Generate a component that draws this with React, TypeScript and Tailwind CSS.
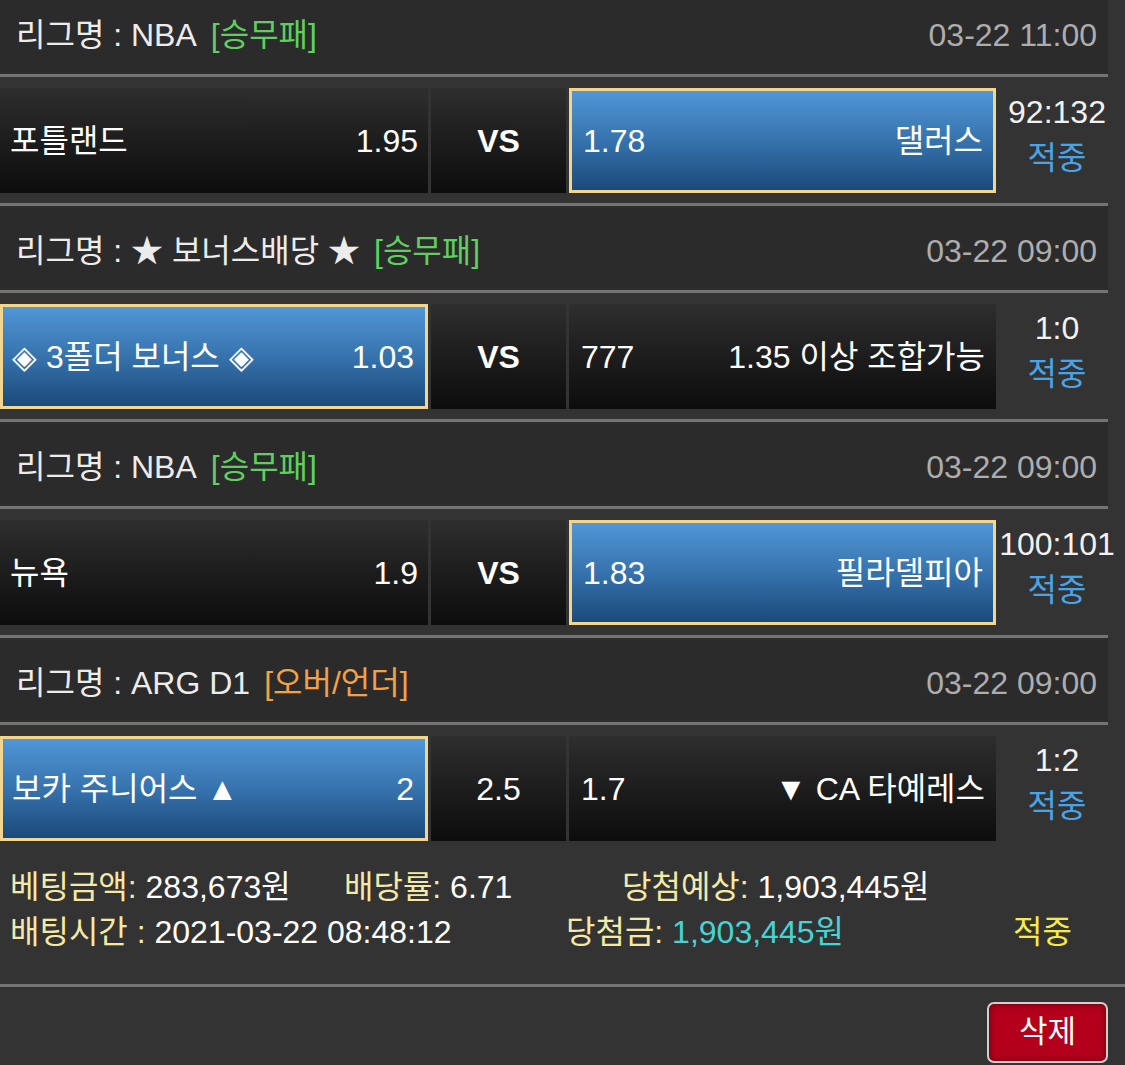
type Side = { name: string; odds: string; picked?: boolean };

type Match = {
  league: string;
  kind: string;
  kindColor: string;
  time: string;
  home: Side;
  mid: string;
  midBold?: boolean;
  away: Side;
  score: string;
};

const matches: Match[] = [
  {
    league: "리그명 : NBA",
    kind: "[승무패]",
    kindColor: "text-[#5fcf5f]",
    time: "03-22 11:00",
    home: { name: "포틀랜드", odds: "1.95" },
    mid: "VS",
    midBold: true,
    away: { name: "댈러스", odds: "1.78", picked: true },
    score: "92:132",
  },
  {
    league: "리그명 : ★ 보너스배당 ★",
    kind: "[승무패]",
    kindColor: "text-[#5fcf5f]",
    time: "03-22 09:00",
    home: { name: "◈ 3폴더 보너스 ◈", odds: "1.03", picked: true },
    mid: "VS",
    midBold: true,
    away: { name: "1.35 이상 조합가능", odds: "777" },
    score: "1:0",
  },
  {
    league: "리그명 : NBA",
    kind: "[승무패]",
    kindColor: "text-[#5fcf5f]",
    time: "03-22 09:00",
    home: { name: "뉴욕", odds: "1.9" },
    mid: "VS",
    midBold: true,
    away: { name: "필라델피아", odds: "1.83", picked: true },
    score: "100:101",
  },
  {
    league: "리그명 : ARG D1",
    kind: "[오버/언더]",
    kindColor: "text-[#f3a145]",
    time: "03-22 09:00",
    home: { name: "보카 주니어스 ▲", odds: "2", picked: true },
    mid: "2.5",
    away: { name: "▼ CA 타예레스", odds: "1.7" },
    score: "1:2",
  },
];

const cellBase = "h-full flex items-center justify-between";
const darkCell = "bg-linear-to-b from-[#2e2e2e] to-[#0d0d0d]";
const pickedCell =
  "bg-linear-to-b from-[#5196d6] via-[#3673ad] to-[#1b4a7a] border-[3px] border-[#f4d58c]";

function MatchBlock({ m }: { m: Match }) {
  return (
    <div>
      <div className="w-[1108px] h-[90px] border-y-[3px] border-[#747474] bg-[#2b2b2b] flex items-center justify-between pl-4 pr-[11px] pt-[6px]">
        <div className="flex items-center text-[#ececec]">
          <span>{m.league}</span>
          <span className={`ml-[14px] ${m.kindColor}`}>{m.kind}</span>
        </div>
        <span className="text-[#adadad]">{m.time}</span>
      </div>

      <div className="flex h-[105px] mt-[11px] mb-[10px] w-[1118px]">
        <div className={`w-[428px] ${cellBase} ${m.home.picked ? pickedCell + " pl-[9px] pr-[11px]" : darkCell + " pl-[10px] pr-[10px]"}`}>
          <span>{m.home.name}</span>
          <span>{m.home.odds}</span>
        </div>
        <div className={`w-[135px] ml-[3px] h-full flex items-center justify-center ${darkCell}`}>
          <span className={m.midBold ? "font-bold" : ""}>{m.mid}</span>
        </div>
        <div className={`w-[427px] ml-[3px] ${cellBase} ${m.away.picked ? pickedCell + " pl-[11px] pr-[10px]" : darkCell + " pl-[12px] pr-[11px]"}`}>
          <span>{m.away.odds}</span>
          <span>{m.away.name}</span>
        </div>
        <div className="flex-1 flex flex-col items-center justify-center pb-[12px] leading-[46px]">
          <span className="text-[#f2f2f2]">{m.score}</span>
          <span className="text-[#4ba3e6]">적중</span>
        </div>
      </div>
    </div>
  );
}

export default function App() {
  return (
    <div className="w-[1125px] h-[1065px] overflow-hidden bg-[#333333] text-white text-[32px] font-['Liberation_Sans','Noto_Sans_CJK_KR',sans-serif]">
      <div className="-mt-[13px]">
        {matches.map((m, i) => (
          <MatchBlock key={i} m={m} />
        ))}
      </div>

      <div className="pt-[14px] pb-[29px] leading-[45px] text-[32px]">
        <div className="flex pl-[10px]">
          <div className="w-[334px]">
            <span className="text-[#f4e9a6]">베팅금액: </span>
            <span>283,673원</span>
          </div>
          <div className="w-[278px]">
            <span className="text-[#f4e9a6]">배당률: </span>
            <span>6.71</span>
          </div>
          <div>
            <span className="text-[#f4e9a6]">당첨예상: </span>
            <span>1,903,445원</span>
          </div>
        </div>
        <div className="flex pl-[10px]">
          <div className="w-[556px]">
            <span className="text-[#f4e9a6]">배팅시간 : </span>
            <span>2021-03-22 08:48:12</span>
          </div>
          <div className="w-[447px]">
            <span className="text-[#f4e9a6]">당첨금: </span>
            <span className="text-[#47d3d3]">1,903,445원</span>
          </div>
          <span className="text-[#f6e94a]">적중</span>
        </div>
      </div>

      <div className="border-t-[3px] border-[#747474] flex justify-end pr-[17px] pt-[15px]">
        <button className="w-[121px] h-[61px] rounded-[7px] border-2 border-[#cfcfcf] bg-[#b3001b] shadow-[inset_0_0_6px_rgba(0,0,0,0.45)] text-[31px] text-white flex items-center justify-center">
          삭제
        </button>
      </div>
    </div>
  );
}
